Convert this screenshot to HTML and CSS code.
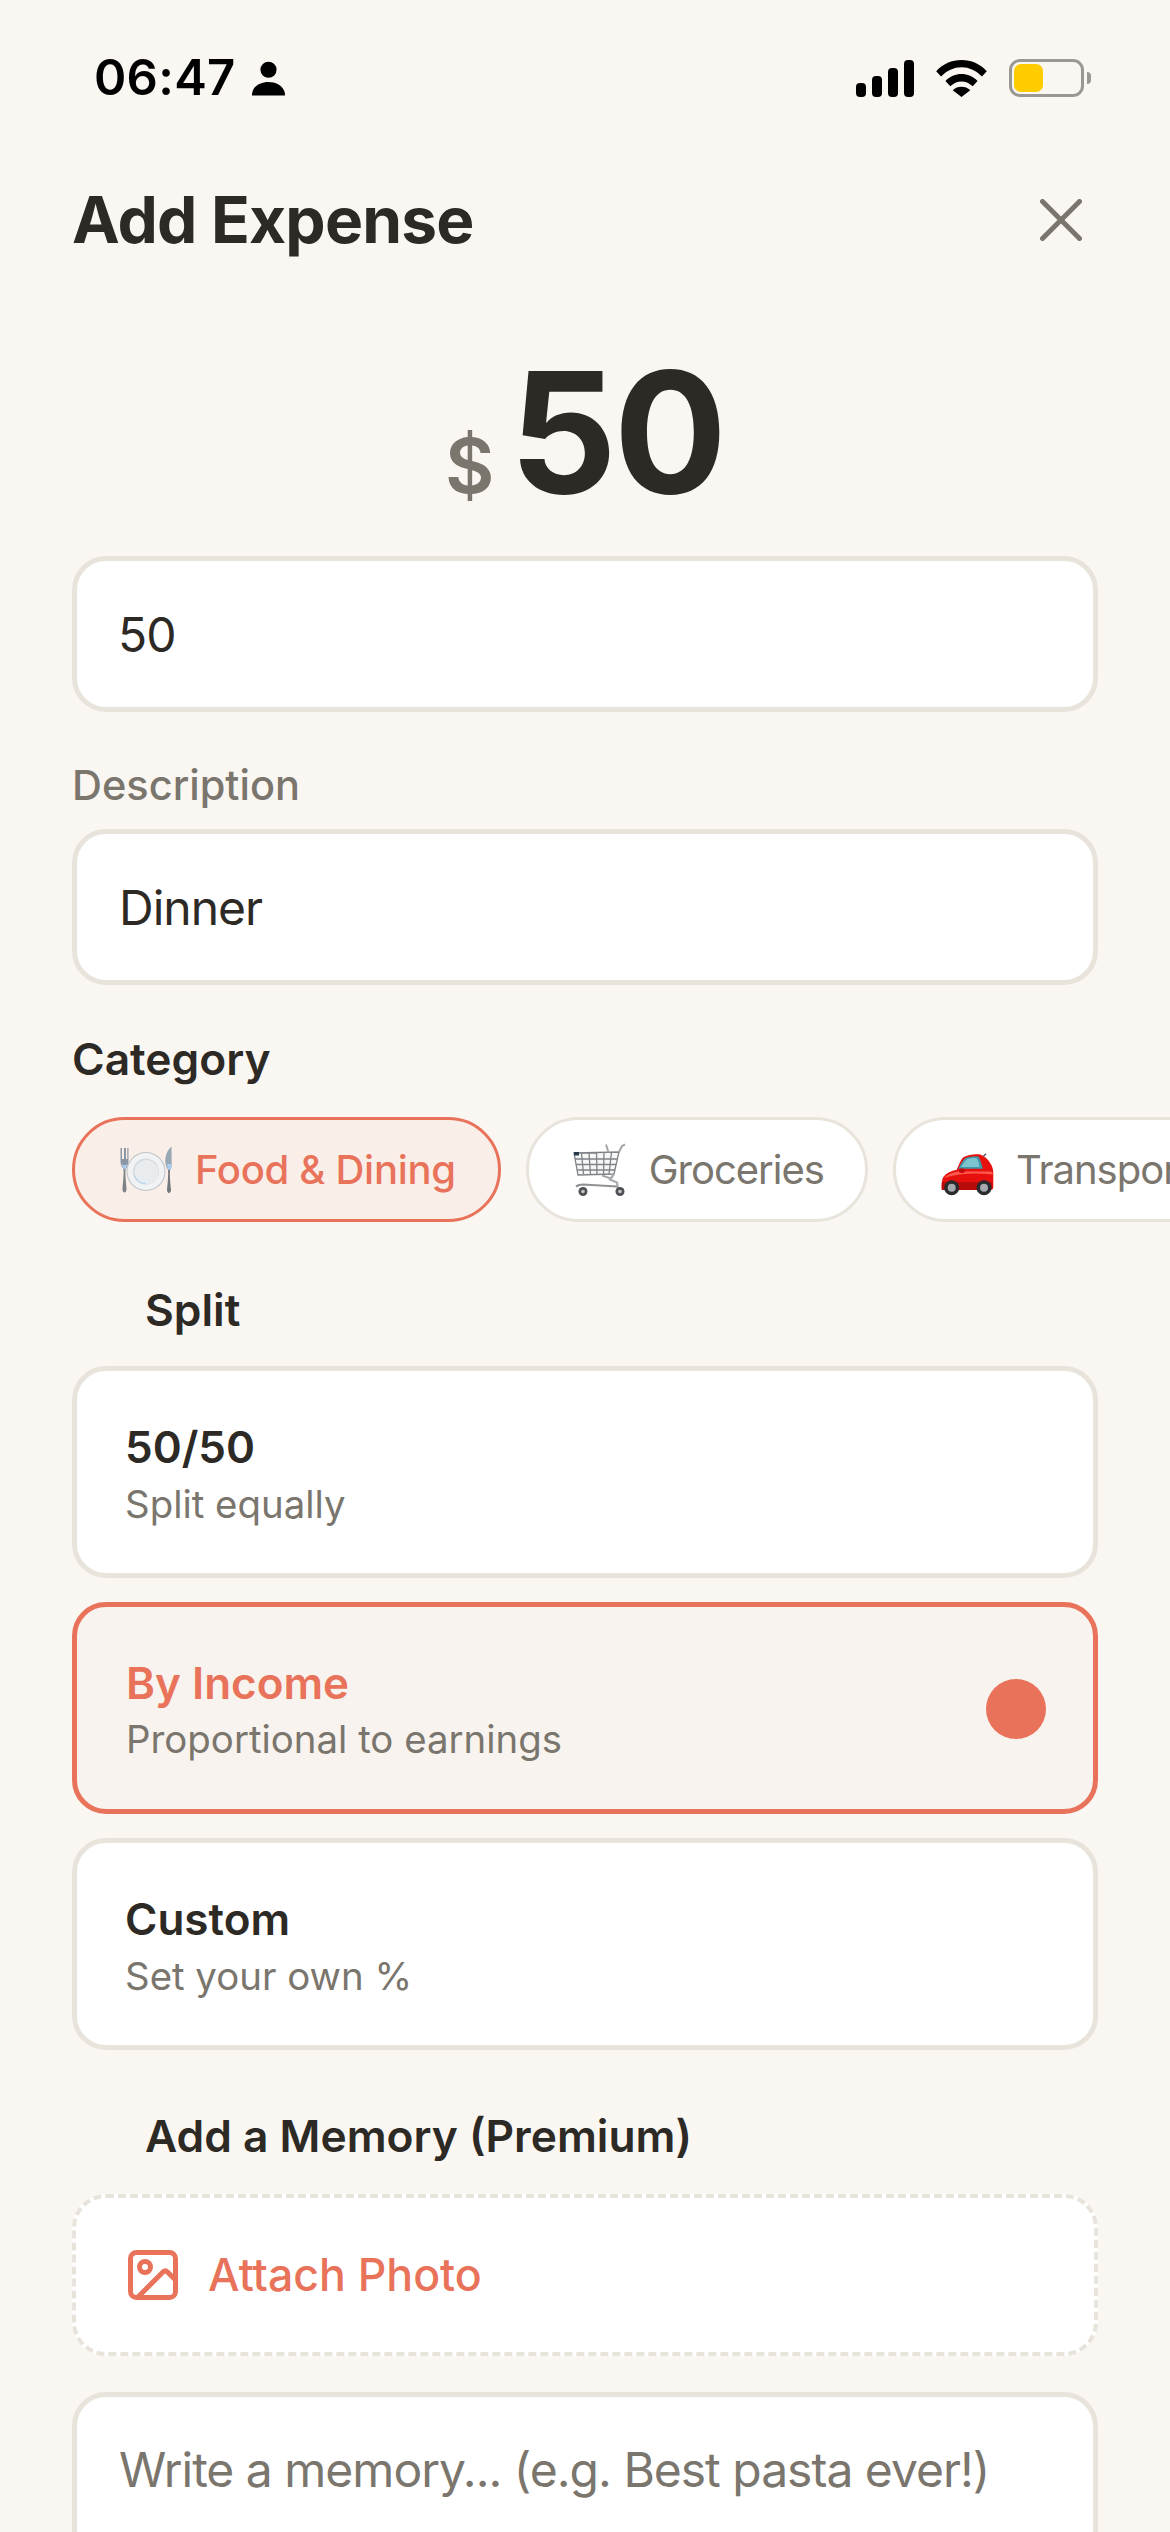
FILE: index.html
```html
<!DOCTYPE html>
<html lang="en">
<head>
<meta charset="utf-8">
<title>Add Expense</title>
<link rel="stylesheet" href="styles.css">
</head>
<body>
<div class="screen">
  <div class="status">
    <div class="status-left">
      <span class="time">06:47</span>
      <svg class="person" viewBox="0 0 34 36"><circle cx="17" cy="9.500" r="8.300"/><path d="M0 36c0-1 0-3 1-5 2-6 9-9 16-9s14 3 16 9c1 2 1 4 1 5z"/></svg>
    </div>
    <div class="status-right">
      <svg class="signal" viewBox="0 0 58 37"><rect x="0" y="23" width="10" height="14" rx="4"/><rect x="16" y="16" width="10" height="21" rx="4"/><rect x="32" y="8" width="10" height="29" rx="4"/><rect x="48" y="0" width="10" height="37" rx="4"/></svg>
      <svg class="wifi" viewBox="0 0 52 38"><path d="M0 11.500C7 4 16 0 26 0s19 4 26 11.500l-5 5.500C41 11 34 7.500 26 7.500S11 11 5 17z"/><path d="M9.500 21.500C14 17 20 14.500 26 14.500s12 2.500 16.500 7l-5 5.500C34.500 24 30.500 22 26 22s-8.500 2-11.500 5z"/><path d="M17 31c2.500-2.300 5.500-3.500 9-3.500s6.500 1.200 9 3.500l-9 7z"/></svg>
      <div class="battery"><div class="battery-fill"></div></div>
      <div class="battery-cap"></div>
    </div>
  </div>

  <div class="header">
    <h1 class="title">Add Expense</h1>
    <svg class="close" viewBox="0 0 42 42"><path d="M2.500 2.500l37 37M39.500 2.500l-37 37"/></svg>
  </div>

  <div class="amount">
    <span class="currency">$</span><span class="value">50</span>
  </div>

  <div class="field"><span class="field-num">50</span></div>

  <div class="label-muted">Description</div>
  <div class="field"><span>Dinner</span></div>

  <div class="label-strong category-label">Category</div>
  <div class="chips">
    <div class="chip chip-active">
      <svg class="emoji" viewBox="0 0 56 56">
        <path d="M5.500 27c.5 6-.8 16-1 20 0 2 .8 3.500 2 3.500s2-1.500 2-3.500c-.2-4-1.500-14-1-20z" fill="#7d8287"/>
        <path d="M2.500 6v13c0 4 1.500 6 3 8h2c1.500-2 3-4 3-8V6h-1.200v11H8V6H6v11H4V6z" fill="#8d97a3"/>
        <path d="M3.500 22c1 3 2 5 3 5s2-2 3-5c-1 1.500-5 1.500-6 0z" fill="#a9cdf0"/>
        <circle cx="28" cy="29.500" r="19.500" fill="#bfc4c9"/>
        <circle cx="28" cy="29.500" r="18.500" fill="#f0f2f4"/>
        <circle cx="28" cy="29.500" r="13" fill="#d5dade"/>
        <circle cx="28.500" cy="30" r="12" fill="#e9ecee"/>
        <path d="M16 33c2 5 6 8.500 12 8.500" fill="none" stroke="#bcd8ef" stroke-width="1.500"/>
        <path d="M50 28c.5 6-.6 16-1 19.500 0 2 .8 3.500 2 3.500s2-1.500 2-3.500c-.4-3.500-1.500-13.500-1-19.500z" fill="#73787c"/>
        <path d="M53.500 4.500C49 8 47 15 47.300 20c.1 3 1.500 6 2.700 8h2.500c1-2 1.200-4 1.200-7z" fill="#98a8b5"/>
        <path d="M49 22c.5 3 1 5 1.500 6h2c.5-1.500.8-3.500 1-6z" fill="#a9cdf0"/>
      </svg>
      <span>Food &amp; Dining</span>
    </div>
    <div class="chip">
      <svg class="emoji" viewBox="0 0 56 56">
        <path d="M2 11l45-1-5 22-36 1z" fill="#f7f7f7"/>
        <path d="M2 11l45-1-5 22-36 1zM9.500 11l2 21M17 11l1.500 21.500M24.500 10.500L25 32M32 10.500L31.500 32M39.500 10.500L37 32M3 17h42.500M4 22.500h40M5 28h38" fill="none" stroke="#7f8387" stroke-width="1.300"/>
        <path d="M47 10l3-6 3-1.500M34 2.500l2.500 8" fill="none" stroke="#a3a6a9" stroke-width="2"/>
        <path d="M42 32l-4 5.500 7 3 1 6M30 33.500l9 3" fill="none" stroke="#a8abae" stroke-width="2.200"/>
        <path d="M4 44.500c2-1.500 4-2 7-2l34 2" fill="none" stroke="#8f9295" stroke-width="2.200"/>
        <rect x="2" y="10" width="5" height="3.500" fill="#2b3a4d"/>
        <circle cx="11" cy="49.500" r="4.500" fill="#4e5053"/><circle cx="11" cy="49.500" r="1.800" fill="#c4c6c8"/>
        <circle cx="48" cy="49.500" r="4.500" fill="#4e5053"/><circle cx="48" cy="49.500" r="1.800" fill="#c4c6c8"/>
      </svg>
      <span>Groceries</span>
    </div>
    <div class="chip">
      <svg class="emoji" viewBox="0 0 56 56">
        <path d="M44.300 14.500L47 11.800" stroke="#55585c" stroke-width="1.500"/>
        <path d="M2.700 47c-.5-4 0-9 1.600-12 3-4 8-6 13.400-7.200 2-5 4-10 6.600-12.600 5-3 13-3.500 17-2.700 4 1.500 8 5 10 8.800 2 3 3 6 3 10.500V45c0 2-1 3-3 3H4c-1 0-1.300-.5-1.300-1z" fill="#e6110f"/>
        <path d="M5 36c4-4 9-6 15-6.500h31c1.500 0 2.500 1 3 3-16-2-35-1.500-49 3.500z" fill="#ff5a4d"/>
        <path d="M19.300 26.800c2-4 4-8.500 7.700-11 4-1.500 8.500-1.500 12.300-1.300 2 3 3.700 8 4.400 12.300z" fill="#3f97a8"/>
        <path d="M22 25c2-3 4-6.500 6.500-8 3-1 6-1 9-.8 1.500 2 2.500 5 3 8.800z" fill="#7cc4cf"/>
        <rect x="20" y="26.500" width="6" height="4.500" rx="2" fill="#c40d0c"/>
        <path d="M3 40h50v5c0 2-1 3-3 3H4c-1 0-1.300-.5-1.300-1z" fill="#b80c0b"/>
        <circle cx="12.700" cy="45.800" r="7.500" fill="#2a2b2d"/><circle cx="12.700" cy="45.800" r="4" fill="#a6a9ad"/>
        <circle cx="45" cy="45.800" r="7.500" fill="#2a2b2d"/><circle cx="45" cy="45.800" r="4" fill="#a6a9ad"/>
      </svg>
      <span>Transport</span>
    </div>
  </div>

  <div class="label-strong label-indent split-label">Split</div>
  <div class="options">
    <div class="option">
      <div class="option-name">50/50</div>
      <div class="option-desc">Split equally</div>
    </div>
    <div class="option option-active">
      <div>
        <div class="option-name">By Income</div>
        <div class="option-desc">Proportional to earnings</div>
      </div>
      <div class="dot"></div>
    </div>
    <div class="option">
      <div class="option-name">Custom</div>
      <div class="option-desc">Set your own %</div>
    </div>
  </div>

  <div class="label-strong label-indent memory-label">Add a Memory (Premium)</div>
  <div class="attach">
    <svg class="photo" viewBox="0 0 50 50"><rect x="2.500" y="2.500" width="45" height="45" rx="6"/><circle cx="17" cy="17" r="5.500"/><path d="M10 47l25-25c1.500-1.500 3-1.500 4.500 0l8 8"/></svg>
    <span>Attach Photo</span>
  </div>
  <div class="field memory"><span>Write a memory... (e.g. Best pasta ever!)</span></div>
</div>
</body>
</html>
```
FILE: styles.css
```css
* { box-sizing: border-box; }
html, body { margin: 0; padding: 0; }
body { background: #faf7f2; font-family: Inter, "Liberation Sans", sans-serif; color: #2d2a26; }
.screen { width: 1170px; height: 2532px; overflow: hidden; padding: 0 72px; }

.status { height: 158px; padding: 53px 7px 0 22px; display: flex; justify-content: space-between; align-items: flex-start; }
.status-left { display: flex; align-items: center; gap: 16px; height: 50px; }
.time { font-size: 49px; font-weight: 600; color: #000; line-height: 50px; letter-spacing: 0.300px; }
.person { width: 33px; height: 36px; fill: #000; }
.status-right { display: flex; align-items: center; height: 50px; }
.signal { width: 58px; height: 37px; fill: #000; margin-right: 22px; }
.wifi { width: 51px; height: 37px; fill: #000; margin-right: 22px; }
.battery { width: 75px; height: 38px; border: 3.500px solid #9a9893; border-radius: 11px; padding: 2px; }
.battery-fill { width: 29px; height: 100%; background: #ffcc00; border-radius: 7px; }
.battery-cap { width: 4px; height: 12px; background: #9a9893; border-radius: 0 4px 4px 0; margin-left: 3px; }

.header { display: flex; justify-content: space-between; align-items: center; height: 124px; padding-right: 16px; }
.title { font-size: 64px; font-weight: 700; margin: 0 0 2px; letter-spacing: -0.800px; color: #2d2a26; }
.close { width: 42px; height: 42px; fill: none; stroke: #7a756d; stroke-width: 5; stroke-linecap: round; }

.amount { display: flex; justify-content: center; align-items: baseline; height: 219px; margin-top: 55px; padding-right: 1px; }
.currency { font-size: 76px; font-weight: 600; color: #7a756d; margin-right: 15px; }
.value { font-size: 168px; font-weight: 700; line-height: 190px; letter-spacing: -3px; }

.field { height: 156px; background: #fff; border: 5px solid #e8e4dc; border-radius: 34px; padding: 0 42px; display: flex; align-items: center; font-size: 48px; letter-spacing: -1px; }
.field-num { margin-left: -1px; }
.label-muted { font-size: 41.500px; font-weight: 500; color: #7a756d; margin: 48px 0 19px; line-height: 50px; }
.label-strong { font-size: 44.300px; font-weight: 600; line-height: 54px; }
.label-indent { padding-left: 73px; }

.category-label { margin-top: 47px; }
.chips { display: flex; gap: 25px; margin-top: 31px; margin-right: -72px; }
.chip { height: 105px; flex: none; display: flex; align-items: center; gap: 21px; padding: 0 41px 0 43px; border: 3px solid #e8e4dc; background: #fff; border-radius: 53px; font-size: 40px; letter-spacing: -1px; color: #7a756d; }
.chip-active { border-color: #e8735a; background: #faeee8; color: #e8735a; font-weight: 500; letter-spacing: -0.300px; padding-right: 42px; }
.emoji { width: 56px; height: 56px; flex: none; }

.split-label { margin-top: 61px; }
.options { display: flex; flex-direction: column; gap: 24px; margin-top: 29px; }
.option { height: 212px; background: #fff; border: 5px solid #e8e4dc; border-radius: 34px; padding: 2px 47px 0 48px; display: flex; flex-direction: column; justify-content: center; }
.option-active { flex-direction: row; justify-content: space-between; align-items: center; background: #f8f3ee; border-color: #e8735a; padding-top: 1px; padding-left: 49px; }
.option-name { font-size: 44px; font-weight: 600; line-height: 56px; margin-bottom: 5px; }
.option-active .option-name { color: #e8735a; margin-bottom: 4px; }
.option-desc { font-size: 38.400px; color: #7a756d; line-height: 48px; }
.dot { width: 60px; height: 60px; border-radius: 50%; background: #e8735a; }

.memory-label { margin-top: 59px; }
.attach { height: 162px; margin-top: 31px; background: #fff; border: 4px dashed #e8e4dc; border-radius: 34px; padding: 0 52px; display: flex; align-items: center; gap: 30px; color: #e8735a; font-size: 44.600px; font-weight: 500; }
.photo { width: 50px; height: 50px; flex: none; fill: none; stroke: #e8735a; stroke-width: 5; }
.memory { margin-top: 36px; color: #7a756d; height: 240px; align-items: flex-start; padding-top: 43px; }
```
